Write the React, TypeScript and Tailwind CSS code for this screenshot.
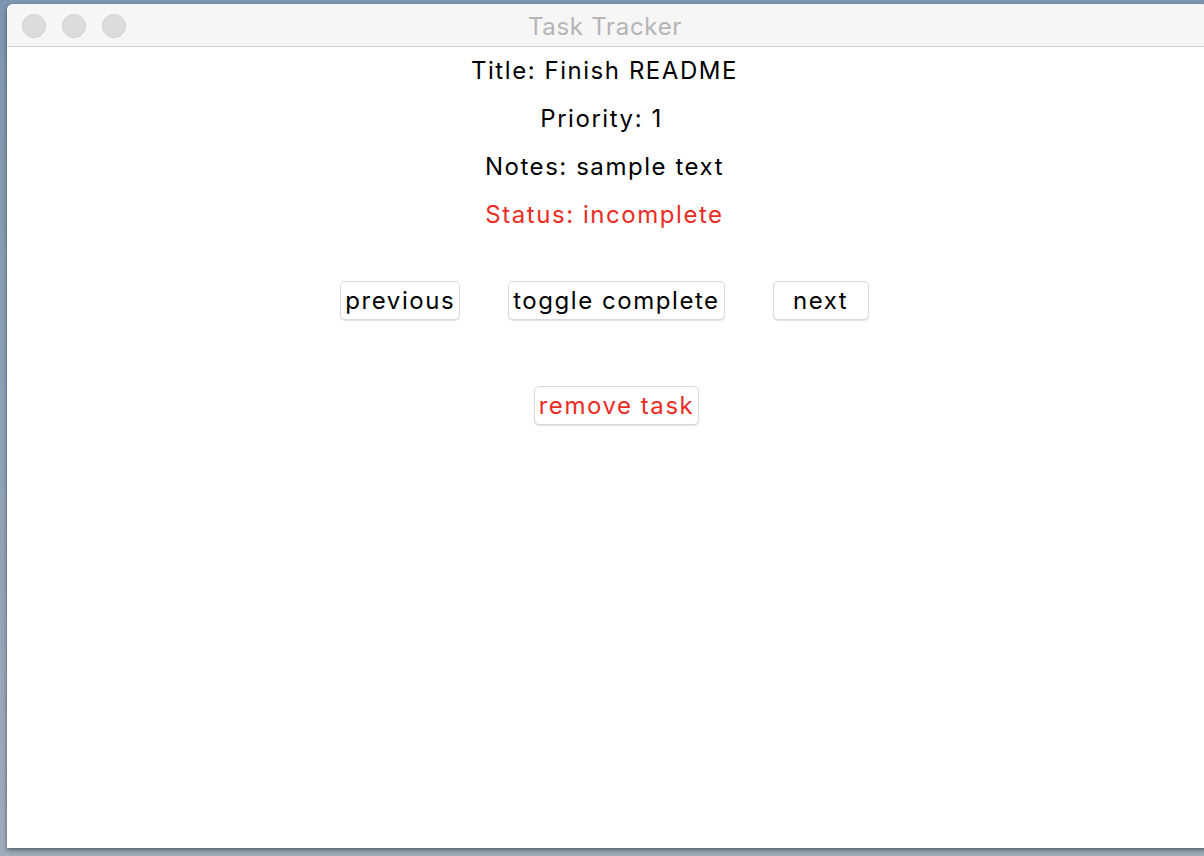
import React from "react";

const font = { fontFamily: "Inter, 'Noto Sans', sans-serif" };

function Btn({ children, red }: { children: React.ReactNode; red?: boolean }) {
  return (
    <button
      className={
        "h-[39px] min-w-[96px] px-[4px] rounded-[5px] border border-[#d9d9d9] bg-white shadow-[0_1px_1px_rgba(0,0,0,0.12)] text-[24px] leading-none tracking-[1.55px] " +
        (red ? "text-[#ec2c24]" : "text-black")
      }
    >
      {children}
    </button>
  );
}

export default function App() {
  return (
    <div
      className="w-[1204px] h-[856px] overflow-hidden bg-gradient-to-b from-[#7e95b0] to-[#9eabbb] pt-[4px] pl-[7px]"
      style={font}
    >
      <div className="w-[1200px] h-[844px] bg-white rounded-t-[6px] overflow-hidden flex flex-col shadow-[0_2px_4px_rgba(0,0,0,0.45)]">
        <div className="h-[43px] shrink-0 bg-[#f6f6f6] border-b border-[#d2d2d2] flex items-center relative">
          <div className="flex gap-[16px] pl-[15px] pt-[1px]">
            <span className="w-[24px] h-[24px] rounded-full bg-[#dcdcdc] border border-[#d0d0d0]" />
            <span className="w-[24px] h-[24px] rounded-full bg-[#dcdcdc] border border-[#d0d0d0]" />
            <span className="w-[24px] h-[24px] rounded-full bg-[#dcdcdc] border border-[#d0d0d0]" />
          </div>
          <div className="absolute inset-0 flex items-center justify-center pr-[4px] pt-[3px] text-[24px] tracking-[0.7px] text-[#b4b4b4]">
            Task Tracker
          </div>
        </div>
        <div className="flex flex-col items-center pr-[5px] text-[24px] tracking-[1.55px]">
          <div className="h-[48px] flex items-center text-black">Title: Finish README</div>
          <div className="h-[48px] flex items-center text-black pr-[6px]">Priority: 1</div>
          <div className="h-[48px] flex items-center text-black">Notes: sample text</div>
          <div className="h-[48px] flex items-center text-[#ec2c24]">Status: incomplete</div>
          <div className="flex gap-[48px] mt-[42px]">
            <Btn>previous</Btn>
            <Btn>toggle complete</Btn>
            <Btn>next</Btn>
          </div>
          <div className="mt-[66px] ml-[24px]">
            <Btn red>remove task</Btn>
          </div>
        </div>
      </div>
    </div>
  );
}
